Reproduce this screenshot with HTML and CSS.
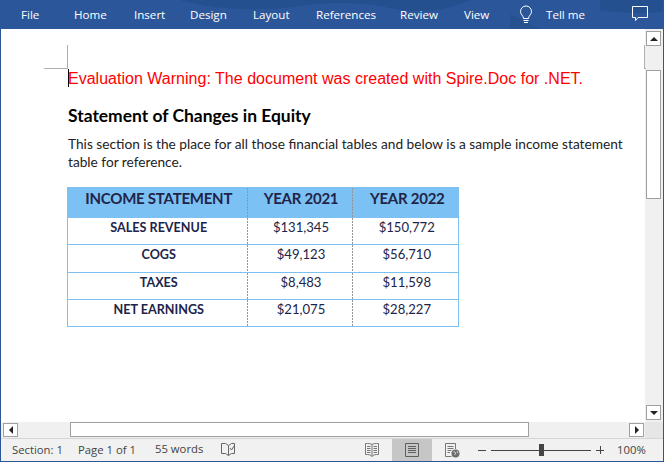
FILE: index.html
```html
<!DOCTYPE html>
<html lang="en">
<head>
<meta charset="utf-8">
<title>Word</title>
<link rel="stylesheet" href="styles.css">
</head>
<body>
<div class="app">
  <header class="ribbon">
    <svg class="ribbon-art" width="664" height="29" viewBox="0 0 664 29">
      <path d="M180 0C215 10 260 12 300 6C340 0 370 4 390 8C420 14 450 10 470 0Z" fill="#24508f"/>
      <path d="M600 0V10C625 14 650 14 664 11V0Z" fill="#25508f"/>
      <path d="M510 14C520 18 530 24 540 29H510Z" fill="#27528f"/>
    </svg>
    <nav class="tabs">
      <span class="tab tab-file">File</span>
      <span class="tab tab-home">Home</span>
      <span class="tab tab-insert">Insert</span>
      <span class="tab tab-design">Design</span>
      <span class="tab tab-layout">Layout</span>
      <span class="tab tab-refs">References</span>
      <span class="tab tab-review">Review</span>
      <span class="tab tab-view">View</span>
      <svg class="bulb" width="14" height="20" viewBox="0 0 14 20" fill="none" stroke="#fff" stroke-width="1">
        <path d="M4.500 13.500C4.500 10.500 1.500 9.800 1.500 6.500A5.500 5.500 0 0 1 12.500 6.500C12.500 9.800 9.500 10.500 9.500 13.500Z"/>
        <path d="M4.500 15.500H9.500M5 17.500H9"/>
      </svg>
      <span class="tab tab-tell">Tell me</span>
    </nav>
    <svg class="comment" width="17" height="16" viewBox="0 0 17 16" fill="none" stroke="#fff" stroke-width="1">
      <path d="M.5 .5H15.500V11.500H6L3.500 14.500V11.500H.5Z"/>
    </svg>
  </header>

  <div class="workspace">
    <main class="page">
      <i class="mark mark-lv"></i><i class="mark mark-lh"></i>
      <i class="mark mark-rv"></i><i class="mark mark-rh"></i>
      <i class="caret"></i>
      <p class="warning">Evaluation Warning: The document was created with Spire.Doc for .NET.</p>
      <h1 class="title">Statement of Changes in Equity</h1>
      <p class="intro">This section is the place for all those financial tables and below is a sample income statement table for reference.</p>
      <table class="sheet">
        <thead>
          <tr><th class="c1">INCOME STATEMENT</th><th class="c2">YEAR 2021</th><th class="c3">YEAR 2022</th></tr>
        </thead>
        <tbody>
          <tr class="r1"><th>SALES REVENUE</th><td>$131,345</td><td>$150,772</td></tr>
          <tr class="r2"><th>COGS</th><td>$49,123</td><td>$56,710</td></tr>
          <tr class="r3"><th>TAXES</th><td>$8,483</td><td>$11,598</td></tr>
          <tr class="r4"><th>NET EARNINGS</th><td>$21,075</td><td>$28,227</td></tr>
        </tbody>
      </table>
    </main>
    <aside class="vscroll">
      <button class="sbtn"><i class="arrow up"></i></button>
      <div class="vthumb"></div>
      <div class="vtrack"></div>
      <button class="sbtn"><i class="arrow down"></i></button>
    </aside>
  </div>

  <div class="hscroll">
    <button class="hbtn"><i class="arrow left"></i></button>
    <div class="hgap"></div>
    <div class="hthumb"></div>
    <div class="hgap2"></div>
    <button class="hbtn"><i class="arrow right"></i></button>
    <div class="corner"></div>
  </div>

  <footer class="status">
    <span class="st st-section">Section: 1</span>
    <span class="st st-page">Page 1 of 1</span>
    <span class="st st-words">55 words</span>
    <svg class="proof" width="15" height="14" viewBox="0 0 15 14" fill="none" stroke="#666" stroke-width="1">
      <path d="M.5 .5H4.500L7.500 2.500V12.500L4.500 10.500H.5Z"/>
      <path d="M7.500 2.500L10.500 .5H13.500V10.500H10.500L7.500 12.500"/>
      <path d="M9 5L10.500 7L13 3"/>
    </svg>
    <div class="views">
      <span class="view">
        <svg width="14" height="14" viewBox="0 0 14 14" fill="none" stroke="#777" stroke-width="1">
          <path d="M7 1.500C6 .5 3 .5 .5 .5V11.500C3 11.500 6 11.500 7 13.500C8 11.500 11 11.500 13.500 11.500V.5C11 .5 8 .5 7 1.500V13.500"/>
          <path d="M2 3.500H5.500M2 5.500H5.500M2 7.500H5.500M2 9.500H5.500M8.500 3.500H12M8.500 5.500H12M8.500 7.500H12M8.500 9.500H12"/>
        </svg>
      </span>
      <span class="view view-on">
        <svg width="14" height="14" viewBox="0 0 14 14" fill="none" stroke="#5f5f5f" stroke-width="1">
          <path d="M.5 .5H13.500V13.500H.5Z"/>
          <path d="M3 3.500H11M3 5.500H11M3 7.500H11M3 9.500H11"/>
        </svg>
      </span>
      <span class="view">
        <svg width="15" height="15" viewBox="0 0 15 15" fill="none" stroke="#777" stroke-width="1">
          <path d="M6.500 13.500H.5V.5H10.500V6"/>
          <path d="M2.500 3.500H8.500M2.500 5.500H8.500M2.500 7.500H6.500M2.500 9.500H5"/>
          <circle cx="10.500" cy="10.500" r="4" fill="#6e6e6e" stroke="none"/>
          <path d="M8.500 8.500L11 10L9.500 12M12 8L13 10" stroke="#cfcfcf"/>
        </svg>
      </span>
    </div>
    <div class="zoom">
      <i class="zminus"></i>
      <div class="zslider"><i class="zknob"></i></div>
      <i class="zplus"></i>
    </div>
    <span class="st st-pct">100%</span>
  </footer>
</div>
</body>
</html>
```
FILE: styles.css
```css
* { box-sizing: border-box; }
html, body { margin: 0; padding: 0; background: #fff; }
.app {
  width: 664px; height: 462px; display: flex; flex-direction: column;
  border-left: 1px solid #2b579a; border-right: 1px solid #2b579a; border-bottom: 1px solid #2b579a;
  overflow: hidden;
}

.ribbon { position: relative; height: 29px; flex: none; background: #2b579a; margin: 0 -1px; }
.ribbon-art { position: absolute; left: 0; top: 0; }
.tabs { position: relative; display: flex; align-items: center; height: 29px; padding-left: 21px; }
.tab { font: 11.600px/29px "Open Sans", sans-serif; color: #fff; white-space: nowrap; }
.tab-file { width: 53px; }
.tab-home { width: 60px; }
.tab-insert { width: 56px; }
.tab-design { width: 63px; }
.tab-layout { width: 63px; }
.tab-refs { width: 84px; }
.tab-review { width: 64px; }
.tab-view { width: 55px; }
.bulb { margin-right: 13px; flex: none; }
.comment { position: absolute; left: 632px; top: 6px; }

.workspace { flex: 1; display: flex; min-height: 0; }
.page { position: relative; flex: 1; background: #fff; padding: 40px 20px 0 67px; min-width: 0; }
.mark { position: absolute; background: #b0b0b0; }
.mark-lv { left: 66px; top: 16px; width: 1px; height: 24px; }
.mark-lh { left: 43px; top: 39px; width: 24px; height: 1px; }
.mark-rv { left: 643px; top: 16px; width: 1px; height: 24px; }
.mark-rh { left: 643px; top: 39px; width: 2px; height: 1px; }
.caret { position: absolute; left: 67px; top: 40px; width: 1px; height: 18px; background: #000; }

.warning { margin: 0; font: 16px/20px "Liberation Sans", sans-serif; color: #f00; white-space: nowrap; letter-spacing: .015px; }
.title { margin: 15px 0 0; font: 700 17.450px/24px Lato, sans-serif; color: #000; }
.intro { margin: 7px 0 0; font: 13.700px/18px Lato, sans-serif; color: #222; width: 560px; }

.sheet { margin: 16px 0 0 -1px; border-collapse: collapse; table-layout: fixed; width: 392px; font-family: Lato, sans-serif; color: #212449; }
.sheet th, .sheet td {
  padding: 0 0 0 4px; text-align: center; vertical-align: top;
  border-top: 1px solid #7cc1f2; border-bottom: 1px solid #7cc1f2;
  background-image: repeating-linear-gradient(#959595 0 2px, transparent 2px 3px);
  background-size: 1px 100%; background-repeat: no-repeat; background-position: 0 0;
}
.sheet tr > :first-child { border-left: 1px solid #7cc1f2; background-image: none; padding-left: 3px; }
.sheet tr > :last-child { border-right: 1px solid #7cc1f2; }
.sheet thead th { height: 30px; background-color: #7cc1f3; font-size: 15px; letter-spacing: -.25px; line-height: 20px; font-weight: 700; }
.sheet thead .c3 { padding-left: 5px; }
.sheet tbody th { font-size: 12.600px; line-height: 19px; font-weight: 700; height: 27px; }
.sheet tbody td { font-size: 13.100px; line-height: 19px; height: 27px; }
.sheet .r2 > * { height: 28px; }
.sheet .c1 { width: 179px; }
.sheet .c2 { width: 105px; }
.sheet .c3 { width: 107px; }

.vscroll { flex: none; width: 18px; background: #f0f0f0; display: flex; flex-direction: column; padding: 2px 1px 2px 1px; }
.sbtn, .hbtn { display: flex; align-items: center; justify-content: center; padding: 0; background: #fff; border: 1px solid #a0a0a0; flex: none; }
.sbtn { width: 15px; height: 15px; }
.vthumb { margin-top: 24px; width: 15px; height: 129px; background: #fff; border: 1px solid #a0a0a0; flex: none; }
.vtrack { flex: 1; }
.arrow { width: 0; height: 0; display: block; border-style: solid; border-color: transparent; }
.arrow.up { border-width: 0 4px 4px; border-bottom-color: #222; }
.arrow.down { border-width: 4px 4px 0; border-top-color: #222; }
.arrow.left { border-width: 4px 4px 4px 0; border-right-color: #222; }
.arrow.right { border-width: 4px 0 4px 4px; border-left-color: #222; }

.hscroll { flex: none; height: 17px; display: flex; align-items: stretch; background: #f0f0f0; border-bottom: 1px solid #d4d4d4; padding-left: 2px; }
.hbtn { width: 15px; height: 14px; margin-top: 1px; }
.hgap { width: 52px; }
.hthumb { width: 459px; height: 15px; background: #fff; border: 1px solid #a0a0a0; }
.hgap2 { width: 100px; }
.corner { flex: 1; margin-left: 1px; background: #e6e6e6; }

.status { flex: none; height: 22px; display: flex; align-items: center; background: #f1f1f1; padding-left: 11px; }
.st { flex: none; font: 11.300px/22px "Open Sans", sans-serif; color: #444; white-space: nowrap; }
.st-section { width: 66px; }
.st-page { width: 77px; }
.st-words { width: 66px; line-height: 20px; margin-bottom: 2px; }
.proof { flex: none; }
.views { flex: none; display: flex; margin-left: 116px; height: 22px; }
.view { width: 40px; height: 22px; display: flex; align-items: center; justify-content: center; }
.view-on { background: #c6c6c6; }
.zoom { flex: none; display: flex; align-items: center; margin-left: 6px; }
.zminus { display: block; width: 8px; height: 1px; background: #444; margin-right: 5px; }
.zslider { position: relative; width: 100px; height: 1px; background: #444; }
.zknob { position: absolute; left: 48px; top: -6px; width: 5px; height: 12px; background: #444; }
.zplus { display: block; position: relative; width: 8px; height: 1px; background: #444; margin-left: 5px; }
.zplus::after { content: ""; position: absolute; left: 3.500px; top: -3.500px; width: 1px; height: 8px; background: #444; }
.st-pct { margin-left: 13px; }
```
